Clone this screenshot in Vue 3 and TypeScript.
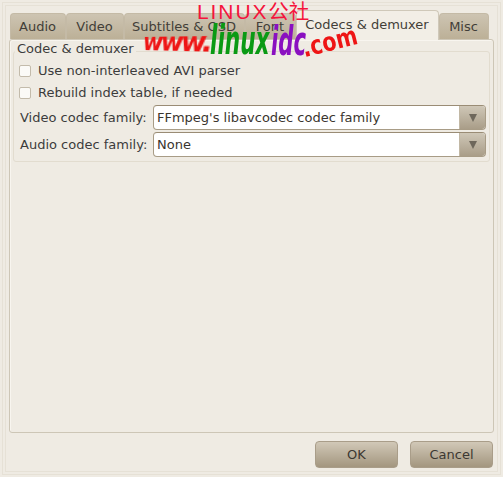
<script setup lang="ts">
const tabs = [
  { label: 'Audio', w: 56 },
  { label: 'Video', w: 58 },
  { label: 'Subtitles & OSD', w: 121 },
  { label: 'Font', w: 51 },
  { label: 'Codecs & demuxer', w: 143, active: true },
  { label: 'Misc', w: 50 },
]
const checks = ['Use non-interleaved AVI parser', 'Rebuild index table, if needed']
const selects = [
  { label: 'Video codec family:', value: "FFmpeg's libavcodec codec family" },
  { label: 'Audio codec family:', value: 'None' },
]
</script>

<template>
  <div class="dialog">
    <div class="tabs">
      <div
        v-for="t in tabs"
        :key="t.label"
        class="tab"
        :class="{ active: t.active }"
        :style="{ width: t.w + 'px' }"
      >{{ t.label }}</div>
    </div>
    <div class="panel">
      <fieldset class="group">
        <legend>Codec &amp; demuxer</legend>
        <label v-for="c in checks" :key="c" class="check">
          <span class="box"></span>
          <span>{{ c }}</span>
        </label>
        <div class="rows">
          <div v-for="s in selects" :key="s.label" class="row">
            <span class="row-label">{{ s.label }}</span>
            <div class="select">
              <span class="value">{{ s.value }}</span>
              <span class="arrow"><i></i></span>
            </div>
          </div>
        </div>
      </fieldset>
    </div>
    <div class="actions">
      <button class="btn">OK</button>
      <button class="btn">Cancel</button>
    </div>
    <div class="mark-top">LINUX<span class="cjk">公社</span></div>
    <div class="mark-url">
      <span class="www">www.</span>
      <span class="linux">linux</span>
      <span class="idc">idc</span>
      <span class="com">.com</span>
    </div>
  </div>
</template>

<style>
html, body { margin: 0; background: #efebe3; }
</style>

<style scoped>
.dialog {
  position: relative;
  width: 503px;
  height: 477px;
  box-sizing: border-box;
  padding: 10px 9px 0 9px;
  background: #efebe3;
  font: 13px "DejaVu Sans", sans-serif;
  color: #3c3c3c;
  overflow: hidden;
  box-shadow:
    inset 0 0 0 2px #efebe3,
    inset 0 0 0 3px #e6e1d6,
    inset 0 0 0 5px #efebe3,
    inset 0 0 0 6px #e6e1d6;
}
.tabs {
  display: flex;
  align-items: flex-end;
  height: 29px;
  padding-left: 1px;
  position: relative;
  z-index: 1;
}
.tab {
  box-sizing: border-box;
  height: 26px;
  padding-right: 1px;
  border-radius: 4px 4px 0 0;
  background: linear-gradient(#cdc4b2, #bcb097);
  border: 1px solid #c4baa6;
  border-bottom: 0;
  text-align: center;
  line-height: 25px;
  color: #423e38;
}
.tab.active {
  height: 30px;
  margin-bottom: -1px;
  background: #f2eee6;
  border-color: #cfc8b9;
  line-height: 27px;
}
.panel {
  box-sizing: border-box;
  height: 394px;
  border: 1px solid #cdc6b6;
  border-radius: 3px;
  padding: 1px 3px 0 3px;
  background: #efebe3;
  box-shadow: inset 1px 1px 0 #f8f5ef;
}
.group {
  margin: 0;
  box-sizing: border-box;
  height: 121px;
  border: 1px solid #e2dccf;
  border-radius: 3px;
  padding: 0 3px 0 6px;
  min-width: 0;
}
legend {
  padding: 0 2px 4px;
  margin-left: -5px;
  line-height: 16px;
  color: #3c3c3c;
}
.check {
  display: flex;
  align-items: center;
  gap: 7px;
  height: 22px;
  margin-left: -1px;
}
.check:first-of-type { margin-top: -2px; }
.box {
  box-sizing: border-box;
  width: 12px;
  height: 12px;
  margin-top: 1px;
  border: 1px solid #c3bbab;
  border-radius: 2px;
  background: #fbfaf7;
}
.rows { margin-top: 1px; }
.row {
  display: flex;
  align-items: center;
  height: 27px;
}
.row-label { width: 133px; flex: none; }
.select {
  flex: 1;
  box-sizing: border-box;
  height: 25px;
  display: flex;
  background: #fff;
  border: 1px solid #a89c86;
  border-top-color: #9a8c75;
  border-radius: 4px;
  overflow: hidden;
}
.value { flex: 1; line-height: 23px; padding-left: 3px; color: #3a352e; }
.arrow {
  width: 25px;
  display: flex;
  align-items: center;
  justify-content: center;
  background: linear-gradient(#cfc7b7, #a99d88);
  border-left: 1px solid #c2b8a5;
}
.arrow i {
  width: 0;
  height: 0;
  border-left: 4px solid transparent;
  border-right: 4px solid transparent;
  border-top: 8px solid #6e675b;
}
.actions {
  display: flex;
  justify-content: flex-end;
  gap: 12px;
  padding: 8px 1px 0 0;
}
.btn {
  box-sizing: border-box;
  width: 83px;
  height: 27px;
  border: 1px solid #a99d89;
  border-radius: 4px;
  background: linear-gradient(#d1c8b7, #a3967f);
  font: inherit;
  color: #3c3832;
  padding: 0;
}
.mark-top {
  position: absolute;
  left: 197px;
  top: -2px;
  font: 21px/24px "Liberation Sans", sans-serif;
  letter-spacing: 1.9px;
  color: #f5143c;
  white-space: nowrap;
  z-index: 3;
}
.cjk {
  font: 20.5px/24px "Noto Sans CJK SC", sans-serif;
  letter-spacing: 0;
}
.mark-url {
  position: absolute;
  left: 143px;
  top: 19px;
  display: flex;
  align-items: flex-start;
  white-space: nowrap;
  font-family: "DejaVu Sans", sans-serif;
  font-weight: bold;
  z-index: 3;
}
.mark-url span { display: block; }
.www {
  width: 67px;
  margin-top: 8px;
  font-size: 23px;
  line-height: 30px;
  font-style: italic;
  letter-spacing: -2.5px;
  color: #ee1515;
  transform: perspective(150px) rotateY(-25deg);
  transform-origin: left center;
}
.linux, .idc {
  font-size: 40px;
  line-height: 42px;
  font-style: italic;
  transform-origin: left top;
}
.linux {
  width: 61px;
  color: #0a9a14;
  transform: scaleX(.54);
}
.idc {
  width: 35px;
  margin-top: 1px;
  color: #8a10c0;
  transform: scaleX(.53);
}
.com {
  margin-top: 14px;
  font-size: 26px;
  line-height: 30px;
  color: #ee1515;
  transform: rotate(-14deg) scaleX(.8);
  transform-origin: left bottom;
}
</style>
